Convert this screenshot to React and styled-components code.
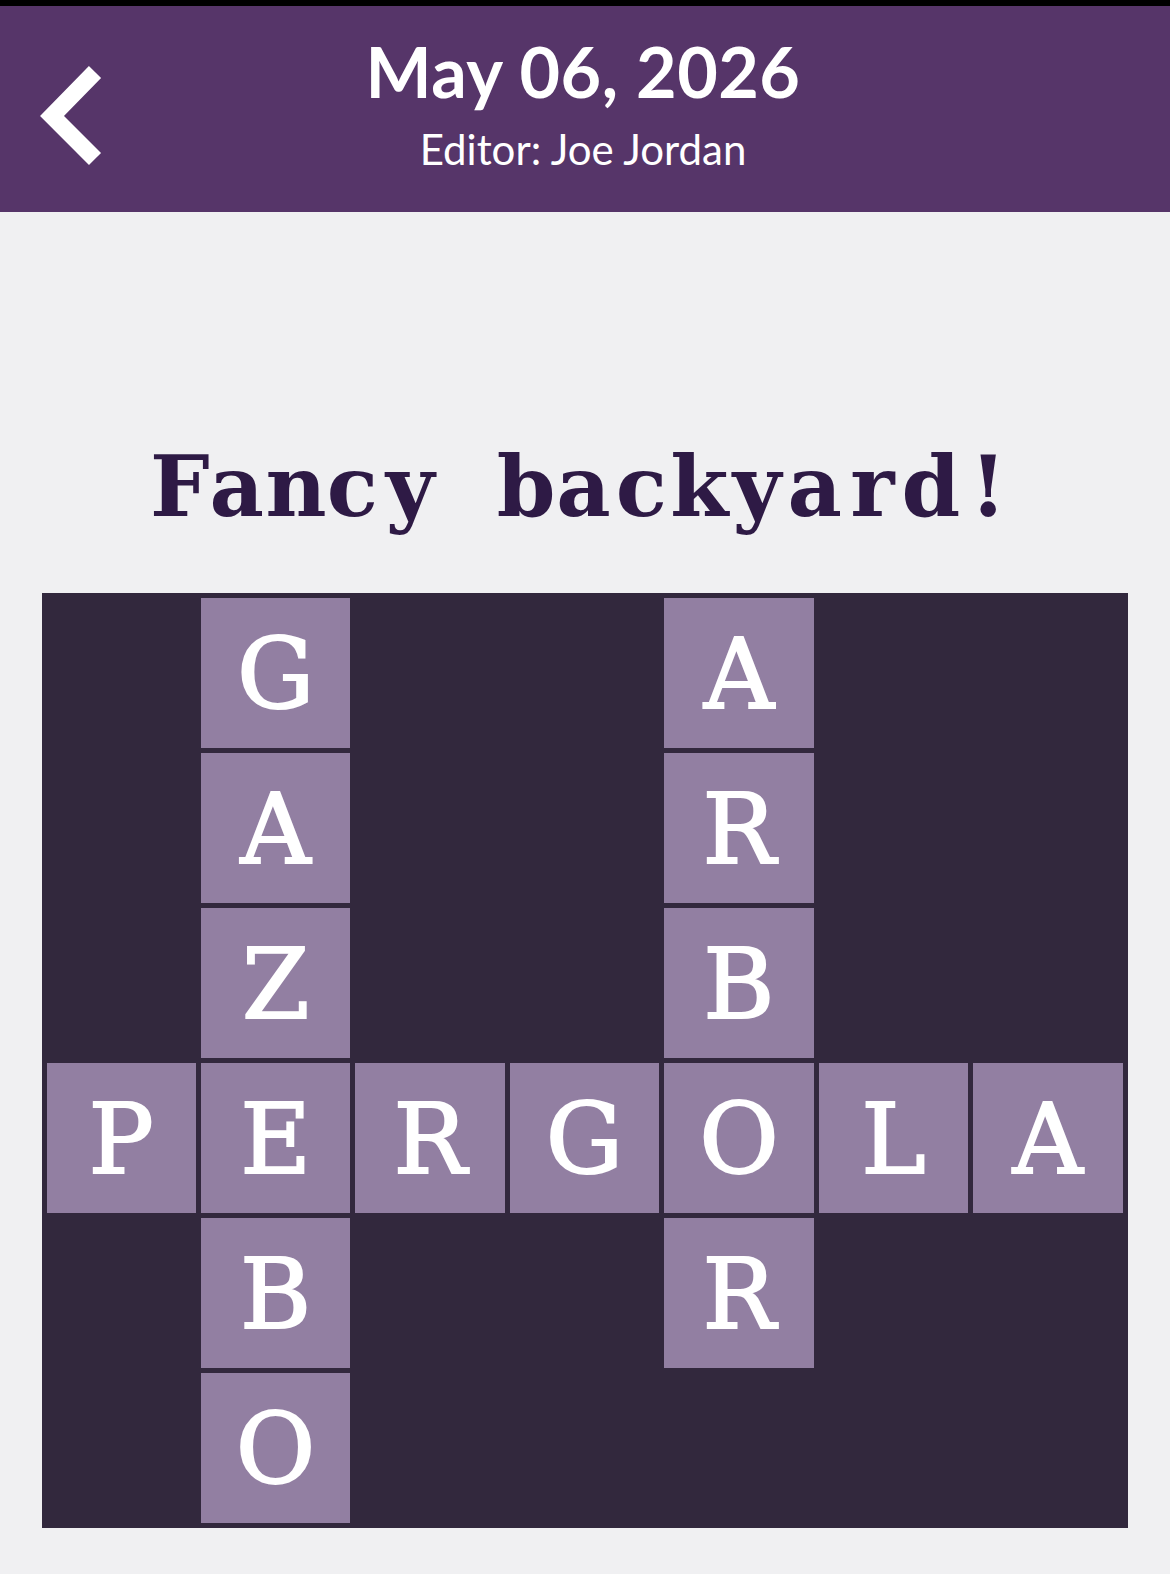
import React from "react";
import styled, { createGlobalStyle } from "styled-components";

const GlobalStyle = createGlobalStyle`
  html, body {
    margin: 0;
    padding: 0;
    background: #f0f0f2;
  }
  body {
    font-family: "Lato", "Noto Sans", sans-serif;
  }
`;

const Page = styled.div`
  width: 1170px;
  min-height: 1574px;
  background: #f0f0f2;
  display: flex;
  flex-direction: column;
`;

const Header = styled.header`
  box-sizing: border-box;
  height: 212px;
  border-top: 6px solid #000;
  padding-top: 25px;
  background: #563569;
  color: #fff;
  display: flex;
  align-items: flex-start;
  position: relative;
`;

const BackButton = styled.button`
  position: absolute;
  left: 34px;
  top: 44px;
  width: 76px;
  height: 120px;
  border: 0;
  padding: 0;
  background: transparent;
  cursor: pointer;
`;

const HeaderText = styled.div`
  flex: 1;
  display: flex;
  flex-direction: column;
  align-items: center;
  padding-right: 4px;
`;

const DateTitle = styled.h1`
  margin: 0 0 14px;
  font-size: 70px;
  font-weight: 700;
  line-height: 80px;
  letter-spacing: 0.5px;
`;

const Editor = styled.div`
  font-size: 42px;
  font-weight: 400;
  line-height: 48px;
`;

const Main = styled.main`
  display: flex;
  flex-direction: column;
  align-items: center;
  padding-top: 225px;
`;

const Clue = styled.h2`
  margin: 0 0 56px;
  font-family: "DejaVu Serif", "Liberation Serif", serif;
  font-weight: 700;
  font-size: 84px;
  line-height: 100px;
  color: #2e1a45;
  white-space: nowrap;
  padding-right: 3px;
`;

const MonoChar = styled.span`
  display: inline-block;
  width: 57.8px;
  text-align: center;
`;

const Board = styled.div`
  width: 1086px;
  box-sizing: border-box;
  padding: 5px;
  background: #32283d;
  display: grid;
  grid-template-columns: repeat(7, 1fr);
  grid-auto-rows: 150px;
  gap: 5px;
  margin-left: -1px;
`;

const Cell = styled.div`
  background: ${(p) => (p.$filled ? "#927fa2" : "transparent")};
  display: flex;
  align-items: center;
  justify-content: center;
  color: #fff;
  font-family: "DejaVu Serif", "Liberation Serif", serif;
  font-size: 97px;
  font-weight: 400;
  -webkit-text-stroke: 2px #fff;
  line-height: 1;
  padding-top: 2px;
`;

const rows = [
  " G  A  ",
  " A  R  ",
  " Z  B  ",
  "PERGOLA",
  " B  R  ",
  " O     ",
];

const clue = "Fancy backyard!";

const BackIcon = () => (
  <svg width="76" height="120" viewBox="0 0 76 120">
    <polyline
      points="61,22 18,66 61,109"
      fill="none"
      stroke="#fff"
      strokeWidth="17"
      strokeLinecap="butt"
      strokeLinejoin="miter"
    />
  </svg>
);

export default function App() {
  return (
    <Page>
      <GlobalStyle />
      <Header>
        <BackButton aria-label="Back">
          <BackIcon />
        </BackButton>
        <HeaderText>
          <DateTitle>May 06, 2026</DateTitle>
          <Editor>Editor: Joe Jordan</Editor>
        </HeaderText>
      </Header>
      <Main>
        <Clue aria-label={clue}>
          {clue.split("").map((ch, i) => (
            <MonoChar key={i}>{ch === " " ? "\u00a0" : ch}</MonoChar>
          ))}
        </Clue>
        <Board>
          {rows.map((row, r) =>
            row.split("").map((ch, c) => (
              <Cell key={`${r}-${c}`} $filled={ch !== " "}>
                {ch !== " " ? ch : ""}
              </Cell>
            ))
          )}
        </Board>
      </Main>
    </Page>
  );
}
